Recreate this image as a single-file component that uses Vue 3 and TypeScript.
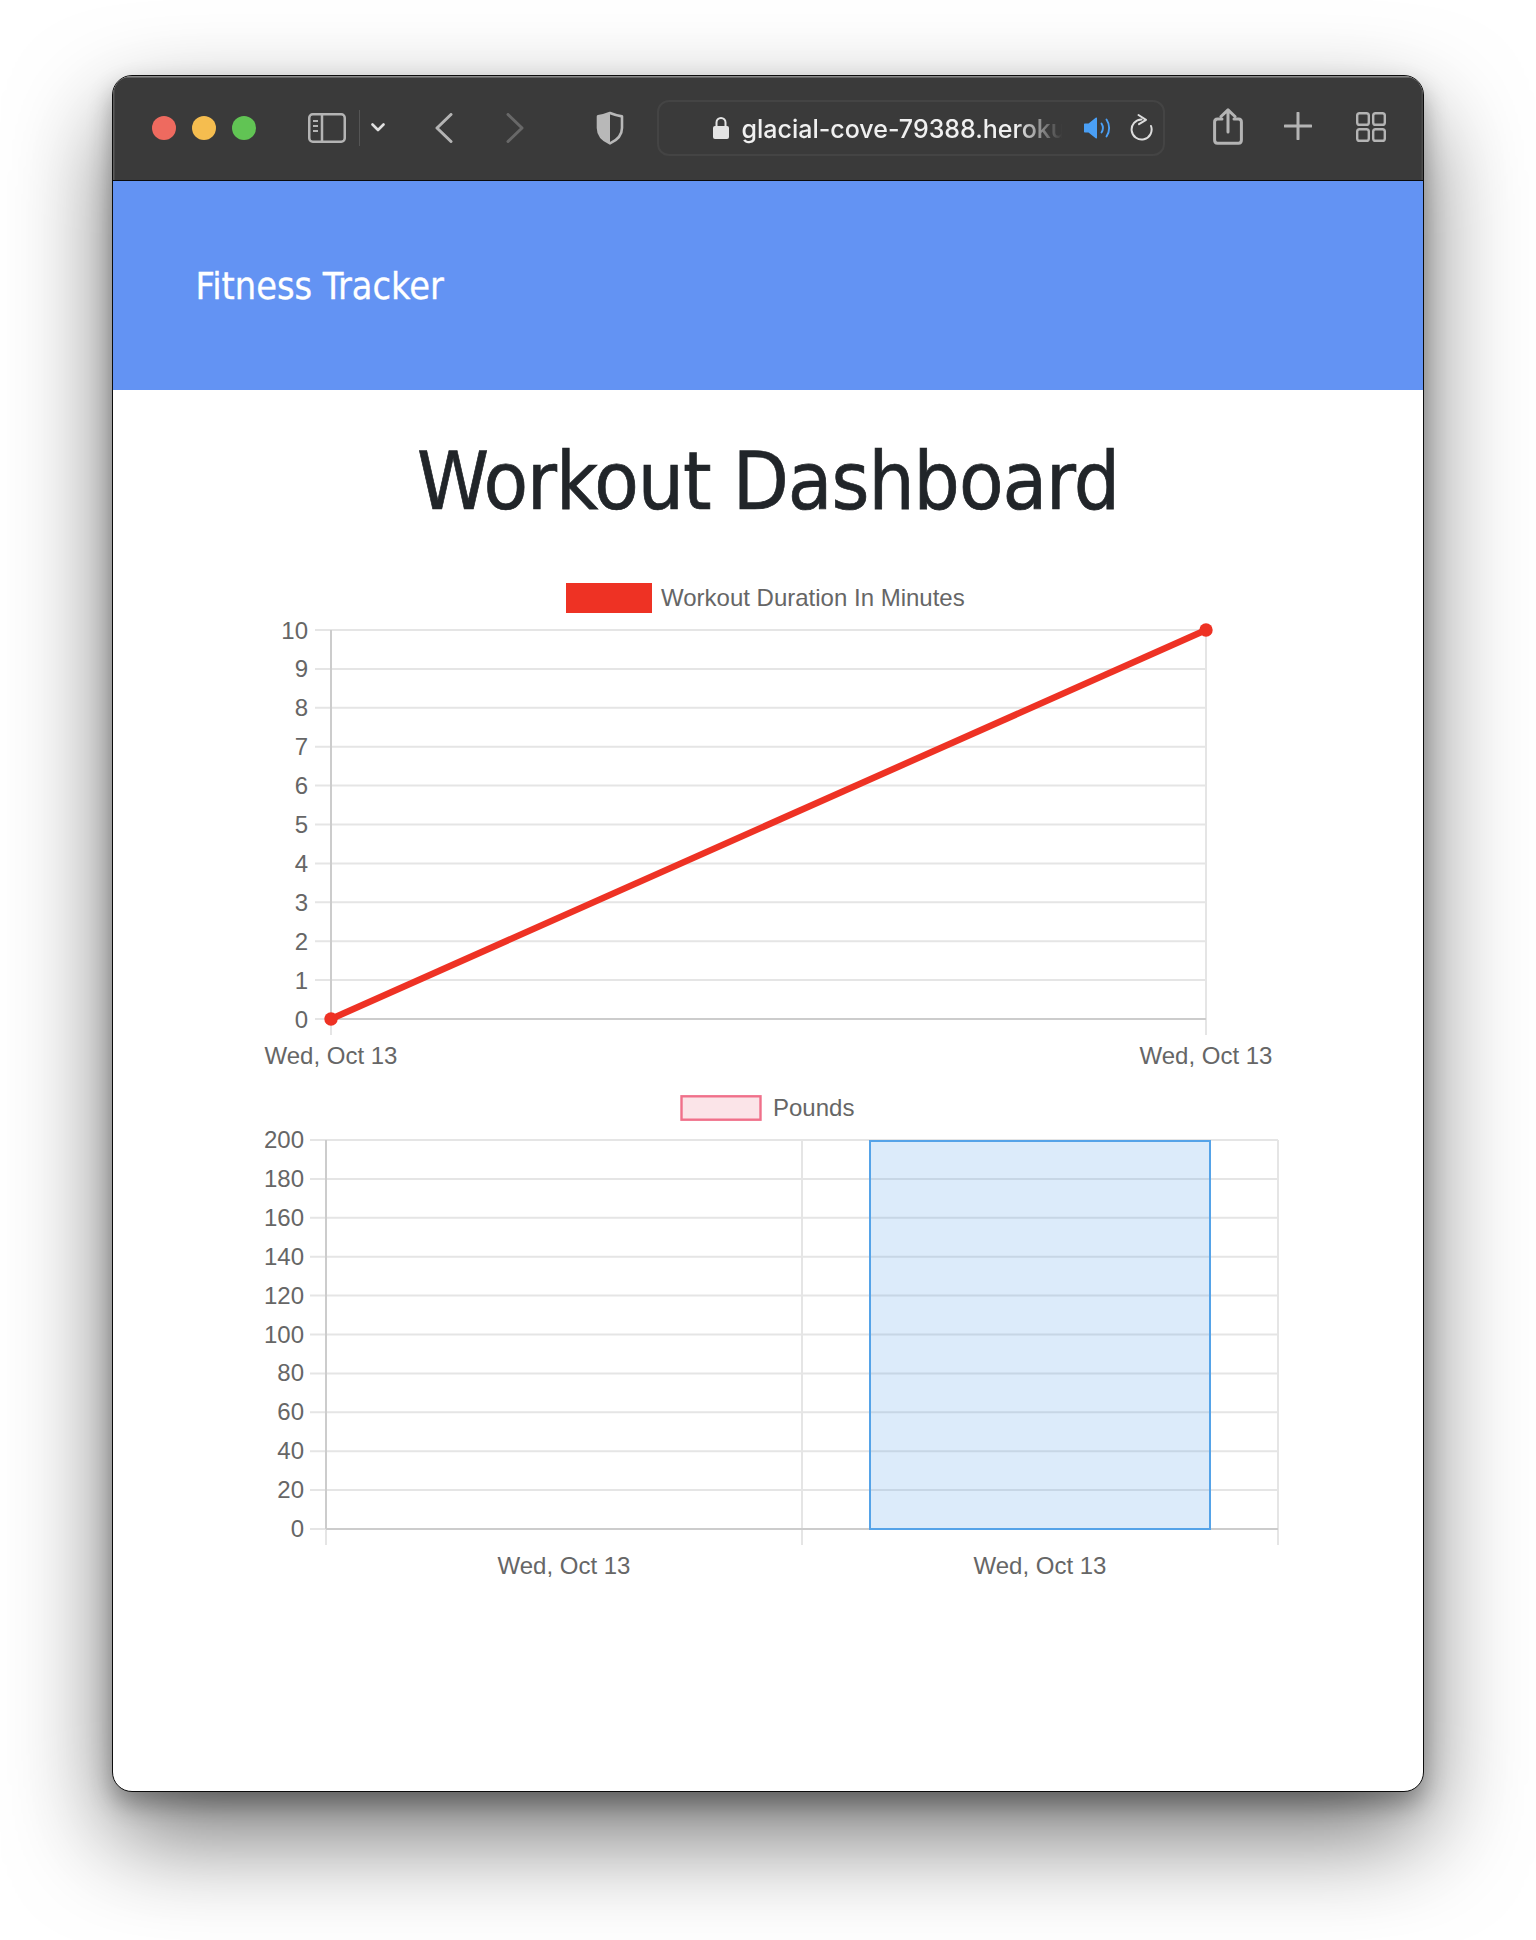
<script setup lang="ts">
interface YTick { y: number; label: string }

const line = { top: 630, bottom: 1019, left: 331, right: 1206, tickLeft: 315, tickBottom: 1035 }
const bars = { top: 1140, bottom: 1529, left: 326, mid: 802, right: 1278, tickLeft: 310, tickBottom: 1545 }

function ticks(top: number, bottom: number, count: number, step: number): YTick[] {
  const out: YTick[] = []
  for (let i = 0; i <= count; i++) {
    out.push({ y: top + ((bottom - top) * i) / count, label: String((count - i) * step) })
  }
  return out
}

const lineTicks = ticks(line.top, line.bottom, 10, 1)
const barTicks = ticks(bars.top, bars.bottom, 10, 20)
</script>

<template>
  <div class="page">
    <div class="window">
      <header class="toolbar">
        <div class="lights">
          <span class="light red"></span>
          <span class="light yellow"></span>
          <span class="light green"></span>
        </div>

        <svg class="ico sidebar" width="38" height="30" viewBox="0 0 38 30" fill="none" stroke="#b4b4b4">
          <rect x="1.25" y="1.25" width="35.5" height="27.5" rx="3.5" stroke-width="2.5" />
          <path d="M14 1.5V28.5" stroke-width="2.5" />
          <path d="M5 8H10M5 13H10M5 18H10" stroke-width="2" />
        </svg>
        <span class="divider"></span>
        <svg class="ico chevron" width="14" height="9" viewBox="0 0 14 9" fill="none" stroke="#e0e0e0" stroke-width="2.6" stroke-linecap="round" stroke-linejoin="round">
          <path d="M1.5 1.5L7 7L12.5 1.5" />
        </svg>
        <svg class="ico back" width="18" height="30" viewBox="0 0 18 30" fill="none" stroke="#b4b4b4" stroke-width="3" stroke-linecap="round" stroke-linejoin="round">
          <path d="M16 1.5L2 15L16 28.5" />
        </svg>
        <svg class="ico forward" width="18" height="30" viewBox="0 0 18 30" fill="none" stroke="#686868" stroke-width="3" stroke-linecap="round" stroke-linejoin="round">
          <path d="M2 1.5L16 15L2 28.5" />
        </svg>
        <svg class="ico shield" width="28" height="34" viewBox="0 0 28 34">
          <path d="M14 2C10 3.6 6 4.8 2 5.4V17C2 24.5 7.5 29.5 14 32.4C20.5 29.5 26 24.5 26 17V5.4C22 4.8 18 3.6 14 2Z" fill="none" stroke="#b8b8b8" stroke-width="2.6" stroke-linejoin="round" />
          <path d="M14 2C10 3.6 6 4.8 2 5.4V17C2 24.5 7.5 29.5 14 32.4Z" fill="#b8b8b8" />
        </svg>

        <div class="urlbar">
          <svg class="ico lock" width="16" height="23" viewBox="0 0 16 23">
            <path d="M3.5 11V6.5a4.5 4.5 0 0 1 9 0V11" fill="none" stroke="#e4e4e4" stroke-width="2" />
            <rect x="0" y="10" width="16" height="13" rx="2" fill="#e4e4e4" />
          </svg>
          <span class="url">glacial-cove-79388.heroku</span>
          <svg class="ico speaker" width="28" height="22" viewBox="0 0 28 22" fill="none">
            <path d="M0 7.5C0 6.9 0.4 6.5 1 6.5H4.5L12 0.6C12.6 0.2 13 0.5 13 1.2V20.8C13 21.5 12.6 21.8 12 21.4L4.5 15.5H1C0.4 15.5 0 15.1 0 14.5Z" fill="#4a9ff5" />
            <path d="M17.5 6.5C19.3 9.3 19.3 12.7 17.5 15.5" stroke="#4a9ff5" stroke-width="1.9" stroke-linecap="round" />
            <path d="M22.5 2.5C26 7.5 26 14.5 22.5 19.5" stroke="#4a9ff5" stroke-width="1.9" stroke-linecap="round" />
          </svg>
          <svg class="ico reload" width="24" height="28" viewBox="0 0 24 28" fill="none" stroke="#dcdcdc" stroke-width="2" stroke-linecap="round" stroke-linejoin="round">
            <path d="M11.5 6.5A10 10 0 1 0 21 13" />
            <path d="M8.5 2L16 6.8L9 11.2" />
          </svg>
        </div>

        <svg class="ico share" width="30" height="37" viewBox="0 0 30 37" fill="none" stroke="#b4b4b4" stroke-width="3" stroke-linecap="round" stroke-linejoin="round">
          <path d="M9 11H4.5C2.8 11 1.6 12.2 1.6 14V32C1.6 33.8 2.8 35.2 4.5 35.2H25.5C27.2 35.2 28.4 33.8 28.4 32V14C28.4 12.2 27.2 11 25.5 11H21" />
          <path d="M15 24V2M8 8.5L15 1.8L22 8.5" />
        </svg>
        <svg class="ico plus" width="28" height="28" viewBox="0 0 28 28" fill="none" stroke="#b4b4b4" stroke-width="3" stroke-linecap="round">
          <path d="M14 1V27M1 14H27" />
        </svg>
        <svg class="ico tabs" width="30" height="30" viewBox="0 0 30 30" fill="none" stroke="#b4b4b4" stroke-width="2.4">
          <rect x="1.2" y="1.2" width="11.6" height="11.6" rx="2.4" />
          <rect x="17.2" y="1.2" width="11.6" height="11.6" rx="2.4" />
          <rect x="1.2" y="17.2" width="11.6" height="11.6" rx="2.4" />
          <rect x="17.2" y="17.2" width="11.6" height="11.6" rx="2.4" />
        </svg>
      </header>

      <nav class="brandbar">
        <span class="brand">Fitness Tracker</span>
      </nav>

      <main class="content">
        <h1 class="title">Workout Dashboard</h1>

        <svg class="chart" width="1024" height="510" viewBox="256 572 1024 510">
          <rect x="566" y="583" width="86" height="30" fill="#ee3224" />
          <text class="label" x="661" y="605.5">Workout Duration In Minutes</text>

          <line v-for="t in lineTicks" :key="t.label" :x1="line.tickLeft" :x2="line.right" :y1="t.y" :y2="t.y" class="grid" />
          <line :x1="line.left" :x2="line.left" :y1="line.bottom" :y2="line.tickBottom" class="grid" />
          <line :x1="line.right" :x2="line.right" :y1="line.top" :y2="line.tickBottom" class="grid" />
          <line :x1="line.left" :x2="line.left" :y1="line.top" :y2="line.bottom" class="axis" />
          <line :x1="line.left" :x2="line.right" :y1="line.bottom" :y2="line.bottom" class="axis" />

          <text v-for="t in lineTicks" :key="'l' + t.label" class="label end" x="308" :y="t.y + 8.5">{{ t.label }}</text>
          <text class="label mid" :x="line.left" y="1064">Wed, Oct 13</text>
          <text class="label mid" :x="line.right" y="1064">Wed, Oct 13</text>

          <line :x1="line.left" :y1="line.bottom" :x2="line.right" :y2="line.top" class="series" />
          <circle :cx="line.left" :cy="line.bottom" r="6.7" fill="#ee3224" />
          <circle :cx="line.right" :cy="line.top" r="6.7" fill="#ee3224" />
        </svg>

        <svg class="chart" width="1024" height="510" viewBox="256 1082 1024 510">
          <rect x="681.5" y="1096.3" width="79" height="23.4" fill="#fbe4e8" stroke="#f0708a" stroke-width="2.4" />
          <text class="label" x="773" y="1116">Pounds</text>

          <line v-for="t in barTicks" :key="t.label" :x1="bars.tickLeft" :x2="bars.right" :y1="t.y" :y2="t.y" class="grid" />
          <line :x1="bars.left" :x2="bars.left" :y1="bars.bottom" :y2="bars.tickBottom" class="grid" />
          <line :x1="bars.mid" :x2="bars.mid" :y1="bars.top" :y2="bars.tickBottom" class="grid" />
          <line :x1="bars.right" :x2="bars.right" :y1="bars.top" :y2="bars.tickBottom" class="grid" />
          <line :x1="bars.left" :x2="bars.left" :y1="bars.top" :y2="bars.bottom" class="axis" />
          <line :x1="bars.left" :x2="bars.right" :y1="bars.bottom" :y2="bars.bottom" class="axis" />

          <text v-for="t in barTicks" :key="'l' + t.label" class="label end" x="304" :y="t.y + 8">{{ t.label }}</text>
          <text class="label mid" x="564" y="1574">Wed, Oct 13</text>
          <text class="label mid" x="1040" y="1574">Wed, Oct 13</text>

          <rect x="870" y="1141" width="340" height="388" class="bar" />
        </svg>
      </main>
    </div>
  </div>
</template>

<style scoped>
.page {
  box-sizing: border-box;
  height: 1940px;
  padding: 75px 112px 0;
  overflow: hidden;
  background: #fff;
}
.window {
  box-sizing: border-box;
  height: 1717px;
  background: #fff;
  border-radius: 20px;
  overflow: hidden;
  border: 1.5px solid #0c0c0c;
  box-shadow: 0 44px 100px rgba(0, 0, 0, 0.55), 0 12px 24px rgba(0, 0, 0, 0.3);
}
.toolbar {
  box-sizing: border-box;
  display: flex;
  align-items: center;
  height: 104.5px;
  padding-left: 38.5px;
  background: #3a3a3a;
  border-bottom: 1.5px solid #0a0a0a;
  box-shadow: inset 0 1.5px 0 #8a8a8a, inset 1.5px 0 0 #5c5c5c, inset -1.5px 0 0 #4c4c4c;
}
.ico {
  flex: none;
  display: block;
}
.lights {
  display: flex;
  gap: 16px;
}
.light {
  width: 24px;
  height: 24px;
  border-radius: 50%;
}
.red { background: #ee6a5f; }
.yellow { background: #f5bd4f; }
.green { background: #61c454; }
.sidebar { margin-left: 52px; }
.divider {
  flex: none;
  width: 1.5px;
  height: 36px;
  margin-left: 13px;
  background: #555;
}
.chevron { margin-left: 10.5px; }
.back { margin-left: 50px; }
.forward { margin-left: 53px; }
.shield { margin-left: 72.5px; }
.urlbar {
  flex: none;
  box-sizing: border-box;
  display: flex;
  align-items: center;
  width: 508px;
  height: 56px;
  margin-left: 32.5px;
  padding-left: 54px;
  border: 2px solid #444;
  border-radius: 12px;
}
.url {
  flex: none;
  width: 334px;
  margin-left: 13px;
  margin-top: 2px;
  white-space: nowrap;
  font-family: Inter, "Liberation Sans", sans-serif;
  font-size: 25px;
  font-weight: 500;
  color: #f0f0f0;
  -webkit-mask-image: linear-gradient(to right, #000 82%, transparent 96%);
  mask-image: linear-gradient(to right, #000 82%, transparent 96%);
}
.speaker { margin-left: 8px; }
.reload { margin-left: 18px; margin-top: -2px; }
.share { margin-left: 48px; margin-top: -3px; }
.plus { margin-left: 41px; margin-top: -3px; }
.tabs { margin-left: 44px; margin-top: -2px; }
.brandbar {
  box-sizing: border-box;
  display: flex;
  align-items: center;
  height: 209px;
  padding: 2px 0 0 82.5px;
  background: #6393f3;
}
.brand {
  font-family: "DejaVu Sans Condensed", "DejaVu Sans", sans-serif;
  font-stretch: condensed;
  font-size: 37.5px;
  -webkit-text-stroke: 0.3px #fff;
  color: #fff;
}
.content {
  display: flex;
  flex-direction: column;
  align-items: center;
}
.title {
  margin: 43px 0 43px;
  font-family: "DejaVu Sans Condensed", "DejaVu Sans", sans-serif;
  font-stretch: condensed;
  font-size: 81px;
  font-weight: 400;
  line-height: 96px;
  letter-spacing: -1px;
  -webkit-text-stroke: 0.7px #212529;
  color: #212529;
}
.chart {
  display: block;
  flex: none;
}
.label {
  font-family: "Liberation Sans", Arial, sans-serif;
  font-size: 24px;
  fill: #666;
}
.end { text-anchor: end; }
.mid { text-anchor: middle; }
.grid {
  stroke: #e5e5e5;
  stroke-width: 2;
}
.axis {
  stroke: #cccccc;
  stroke-width: 2;
}
.series {
  stroke: #ee3224;
  stroke-width: 6.5;
}
.bar {
  fill: rgba(80, 155, 230, 0.2);
  stroke: #55a3e8;
  stroke-width: 2;
}
</style>

<style>
html, body {
  margin: 0;
  background: #fff;
}
</style>
